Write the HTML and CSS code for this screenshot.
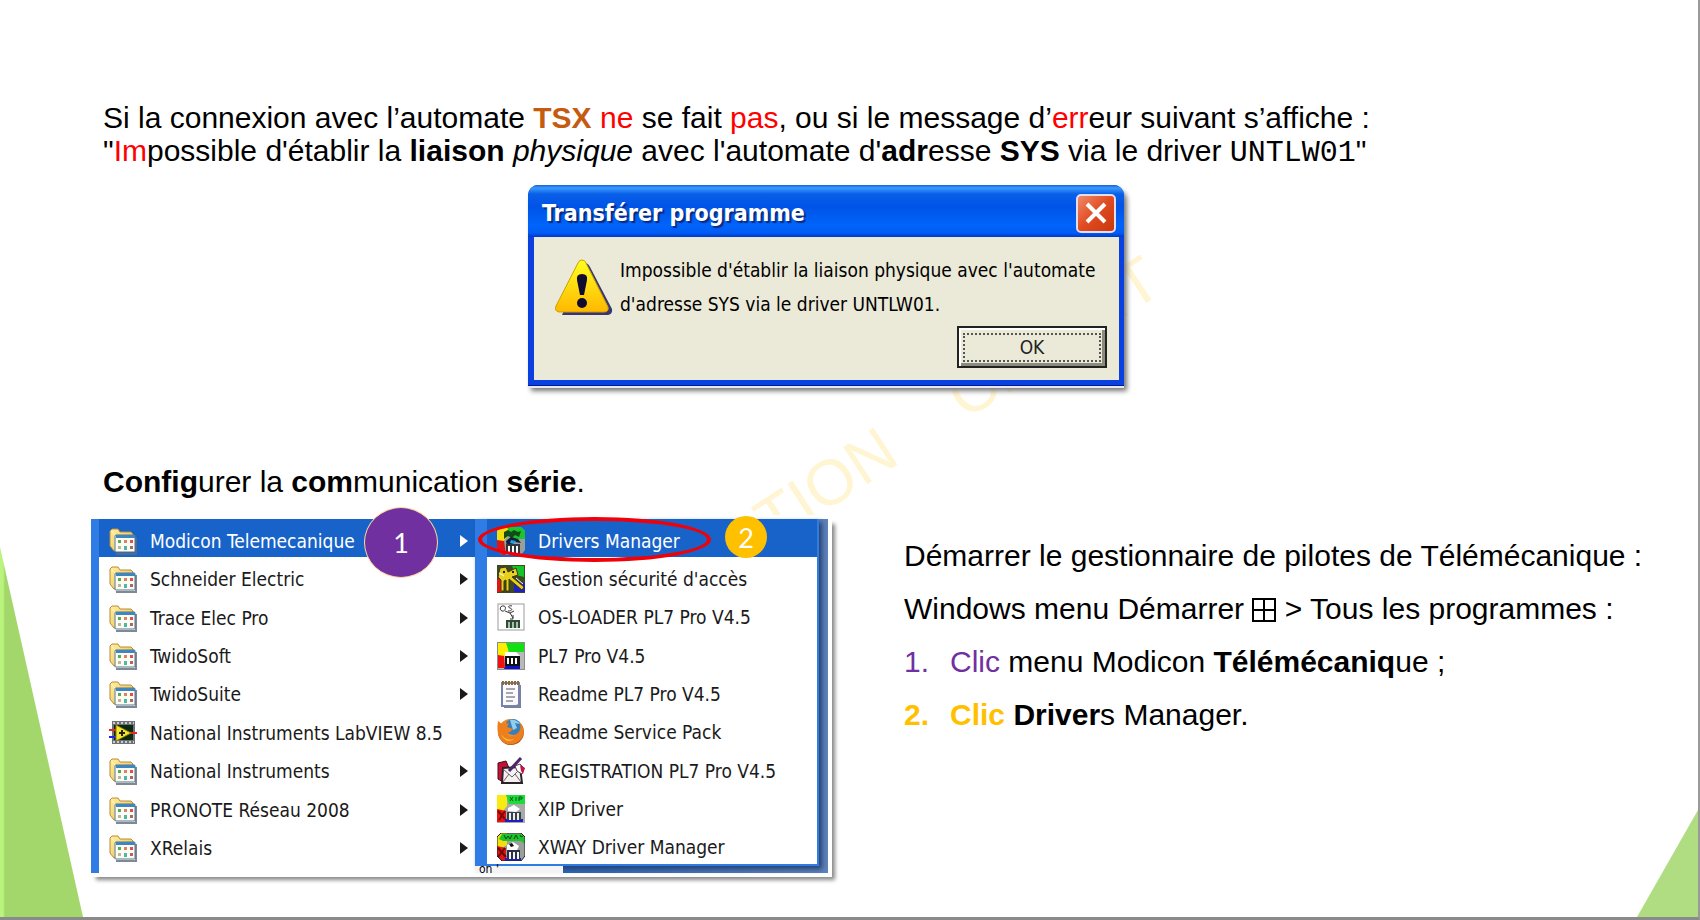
FILE: index.html
```html
<!DOCTYPE html>
<html lang="fr">
  <head>
    <meta charset="UTF-8" />
    <meta name="viewport" content="width=device-width, initial-scale=1.0" />
    <title>Configurer la communication série</title>
    <link rel="stylesheet" href="styles.css">
  </head>
  <body>
    <!-- shared icons -->
    <svg class="defs" aria-hidden="true">
      <defs>
        <linearGradient id="fold" x1="0" y1="0" x2="1" y2="1">
          <stop offset="0" stop-color="#fff0a0" />
          <stop offset="1" stop-color="#e9b94c" />
        </linearGradient>
        <linearGradient id="warn" x1="0" y1="0" x2="0" y2="1">
          <stop offset="0" stop-color="#ffff20" />
          <stop offset="1" stop-color="#ffb800" />
        </linearGradient>
        <radialGradient id="fox" cx="50%" cy="35%" r="65%">
          <stop offset="0" stop-color="#ffc04a" />
          <stop offset="0.6" stop-color="#ee7d1c" />
          <stop offset="1" stop-color="#a8420c" />
        </radialGradient>
        <symbol id="folder" viewBox="0 0 28 28">
          <path d="M7 27h20V10" fill="none" stroke="#5f6c7c" stroke-width="2" opacity=".8" />
          <path d="M1 4l2-2h6l2 3h11l2 2v15l-2 2H5l-4-5z" fill="url(#fold)" stroke="#b98a35" stroke-width="1" />
          <path d="M3 5l3 3v14" fill="none" stroke="#fff6c8" stroke-width="1" />
          <rect x="6" y="8" width="20" height="17" rx="1" fill="#fdfcf2" stroke="#55758e" />
          <rect x="7" y="8" width="19" height="3" fill="#3e86c0" />
          <path d="M9 13h3v3H9z" fill="#5aa85a" />
          <path d="M15 13h3v3h-3z" fill="#e0806a" />
          <path d="M21 13h3v3h-3z" fill="#e04e4e" />
          <path d="M9 19h3v3H9z" fill="#b9b89c" />
          <path d="M15 19h3v4h-3z" fill="#4fb8a4" />
          <path d="M21 19h3v3h-3z" fill="#b36464" />
        </symbol>
        <symbol id="labview" viewBox="0 0 28 28">
          <rect x="3" y="2" width="23" height="23" fill="#6d7176" />
          <path d="M4 4h21M4 23h21" stroke="#c9cdd0" stroke-width="2" stroke-dasharray="2 2" />
          <rect x="5" y="6" width="19" height="15" fill="#0b2a10" />
          <path d="M0 11h8" stroke="#e22" stroke-width="2" />
          <path d="M0 18h8" stroke="#22e" stroke-width="2" />
          <path d="M20 14h8" stroke="#e22" stroke-width="2" />
          <path d="M7 6l15 8-15 8z" fill="#f5e72a" stroke="#8a7d10" />
          <path d="M10 14h6M13 11v6" stroke="#222" stroke-width="2" />
        </symbol>
        <symbol id="plc" viewBox="0 0 28 28">
          <rect width="28" height="28" fill="#8c8c8c" />
          <rect x="1" y="1" width="26" height="26" fill="#b9b9b9" />
          <path d="M1 1h10v9l-4 5H1z" fill="#ffee00" />
          <path d="M9 1h18v9H12z" fill="#12e012" />
          <path d="M1 13l6 1 1 12H1z" fill="#f01010" />
          <path d="M7 27l2-4h14v4z" fill="#1010c8" />
          <path d="M8 10h11l4 4H8z" fill="#fff" />
          <rect x="8" y="14" width="15" height="10" fill="#111" />
          <path d="M10 16h2v6h-2zM14 16h2v6h-2zM18 16h2v6h-2z" fill="#fff" />
        </symbol>
        <symbol id="drivers" viewBox="0 0 28 28">
          <path d="M4 0h20l4 4v19l-4 5H5l-5-5V4z" fill="#9a9f9a" />
          <path d="M0 4l4-4h7l1 8-7 8-5-2z" fill="#f3df10" />
          <path d="M0 13l7 1 2 14H5l-5-5z" fill="#e01515" />
          <path d="M10 0h14l4 4v8H14z" fill="#1cc52b" />
          <path d="M7 5l4-2 3 2 3-2 4 2 3-1-2 6-4-2-3 3-4-2-4 3z" fill="#114d17" />
          <path d="M9 14l5-4 7 2 3 4-6-1-3 3-5 1z" fill="#102040" />
          <path d="M14 13l5 1-2 3-4-1z" fill="#2aa0d8" />
          <path d="M9 17h14v10H9z" fill="#33363a" />
          <path d="M11 19h2v7h-2zM15 19h2v7h-2zM19 19h2v7h-2z" fill="#fff" />
        </symbol>
        <symbol id="xway" viewBox="0 0 28 28">
          <path d="M4 0h20l4 4v19l-4 5H5l-5-5V4z" fill="#9a9f9a" />
          <path d="M0 4l4-4h6v12l-5 3-5-1z" fill="#f3df10" />
          <path d="M5 1h19l4 4v6l-4-3H6L2 6z" fill="#1cc52b" />
          <path d="M7 2l2 4 2-3 2 3 2-4M17 6l2-4 2 4M23 2l1 2 2-1" fill="none" stroke="#0a4a14" stroke-width="1" />
          <path d="M0 13l9 2v13H5l-5-5z" fill="#e01515" />
          <path d="M1 15l8 9M8 15l-7 9" stroke="#6d0808" stroke-width="2" />
          <path d="M10 12l6-3 6 4-2 4H10z" fill="#fff" />
          <path d="M12 11l3-1 2 3-3 1z" fill="#111" />
          <path d="M8 28h16v-3H8z" fill="#1c1cc8" />
          <path d="M10 17h13v9H10z" fill="#2c3044" />
          <path d="M12 19h2v7h-2zM16 19h2v7h-2zM20 19h2v7h-2z" fill="#f4f4f4" />
          <path d="M4 0h20l4 4v19l-4 5H5l-5-5V4z" fill="none" stroke="#222" stroke-width="1" />
        </symbol>
        <symbol id="keys" viewBox="0 0 28 28">
          <rect width="28" height="28" fill="#3b4a22" />
          <path d="M15 1h12v11l-8-2z" fill="#15c527" />
          <path d="M0 14h5v13H0z" fill="#e01515" />
          <path d="M17 18h11v9H17z" fill="#2020c0" />
          <path d="M3 3l6-1 2 5 8-4 2 7-6 2 12 10-2 3-13-11v12h-3V15l-2 1v10H4V15L1 12z" fill="#e8d021" stroke="#40380a" />
          <path d="M19 13l7 6M2 8l5 3" stroke="#fff" stroke-width="1" />
          <path d="M6 6h2v2H6zM15 6h2v2h-2z" fill="#222" />
        </symbol>
        <symbol id="loader" viewBox="0 0 28 28">
          <rect x="1" y="1" width="26" height="26" fill="#fff" stroke="#9b9b9b" />
          <path d="M7 3c-4-1-5 4-2 5s5-4 2-5zM15 3c-3-1-5 1-2 2s2 3-2 3M8 8l5 2 3 5M13 10l4-2M16 12v4h-3" fill="none" stroke="#333" stroke-width="1" />
          <rect x="9" y="17" width="14" height="8" fill="#35463a" />
          <path d="M11 19h2v6h-2zM15 19h2v6h-2zM19 19h2v6h-2z" fill="#9ec6a4" />
        </symbol>
        <symbol id="notes" viewBox="0 0 28 28">
          <path d="M7 27h16V5" fill="none" stroke="#7d8290" stroke-width="2" />
          <path d="M5 3h17v22l-3 1H5z" fill="#fbfbff" stroke="#7783ad" stroke-width="2" />
          <path d="M5 3h17" stroke="#8c6a3a" stroke-width="4" stroke-dasharray="2 1" />
          <path d="M9 9h9M9 13h7M9 17h9M9 21h7" stroke="#555" stroke-width="1" />
        </symbol>
        <symbol id="firefox" viewBox="0 0 28 28">
          <circle cx="14" cy="14" r="13" fill="url(#fox)" />
          <circle cx="16" cy="9" r="8" fill="#3c7fb8" />
          <path d="M13 2c4-1 8 1 10 4l-5-1 2 5-4 2z" fill="#8fd0ea" />
          <path d="M1 3l4 3 7-1-2 4 6 2-3 3-3 1c2 4 8 4 11 0 3-3 3-7 2-10 4 4 5 11 1 16-5 7-15 7-20 1C0 17 0 9 1 3z" fill="#ee7f1d" />
          <path d="M4 15c2 5 7 8 13 6-4 4-11 2-13-6z" fill="#ffc14b" />
        </symbol>
        <symbol id="regist" viewBox="0 0 28 28">
          <path d="M1 6l8-2 3 7-6 14-5-3z" fill="#c41236" stroke="#4a0d1c" />
          <path d="M6 11l17-1 2 16H5z" fill="#f3f1f1" stroke="#2d2228" stroke-width="2" />
          <path d="M6 12l9 8 9-9M6 25l6-8M24 25l-6-8" fill="none" stroke="#6c6066" stroke-width="1" />
          <path d="M18 9l5-2 4 4-2 6-5-3z" fill="#fff" stroke="#55444f" />
          <path d="M23 8l5 3-2 6-2-3z" fill="#c41246" />
          <path d="M24 1l-12 13" stroke="#4a2768" stroke-width="3" />
        </symbol>
        <symbol id="xip" viewBox="0 0 28 28">
          <rect width="28" height="28" fill="#a7aba7" />
          <path d="M0 0h10v11l-4 5H0z" fill="#f7ec11" />
          <path d="M9 0h19v9H12z" fill="#1bdc38" />
          <path d="M13 2l3 4M16 2l-3 4M19 2v4M22 6V2h3v2h-3" fill="none" stroke="#0b5417" stroke-width="1" />
          <path d="M0 14l9 2v11H0z" fill="#ea1212" />
          <path d="M1 16l7 8M8 16l-6 9" stroke="#7d0808" stroke-width="2" />
          <path d="M11 13l6-3 6 4-4 3-8-1z" fill="#fff" />
          <path d="M8 27h18v-3H8z" fill="#1c1cc8" />
          <path d="M10 17h14v8H10z" fill="#3b3f50" />
          <path d="M12 18h2v7h-2zM16 18h2v7h-2zM20 18h2v7h-2z" fill="#e8f4e8" />
        </symbol>
      </defs>
    </svg>

    <main class="slide">
      <div class="corner left"></div>
      <div class="corner right"></div>
      <div class="watermark" aria-hidden="true"><span>PROTECTION</span><span>CREDIT</span></div>

      <p class="intro">
        Si la connexion avec l’automate <b class="orange">TSX</b> <span class="red">ne</span> se fait <span class="red">pas</span>, ou si le message d’<span class="red">err</span>eur suivant s’affiche :<br />
        "<span class="red">Im</span>possible d'établir la <b>liaison</b> <i>physique</i> avec l'automate d'<b>adr</b>esse <b>SYS</b> via le driver <span class="mono">UNTLW01</span>"
      </p>

      <section class="dialog" aria-labelledby="dialog-title">
        <header class="titlebar">
          <h2 id="dialog-title">Transférer programme</h2>
          <button class="close" type="button" aria-label="Fermer">
            <svg viewBox="0 0 24 24" width="24" height="24"><path d="M3 3l18 18M21 3L3 21" stroke="#fff" stroke-width="4" /></svg>
          </button>
        </header>
        <div class="dialog-body">
          <svg class="warning" viewBox="0 0 58 58">
            <path d="M30 5q3 0 5 4l22 42q1 5-4 6H7z" fill="#3b3470" />
            <path d="M27 2q3 0 4 3l22 44q1 5-4 5H4q-5-1-3-6L23 5q1-3 4-3z" fill="url(#warn)" stroke="#c9a200" />
            <path d="M27 16q6 0 5 6l-3 15h-4l-3-15q-1-6 5-6z" fill="#100c30" />
            <circle cx="27" cy="45" r="5" fill="#100c30" />
          </svg>
          <p>Impossible d'établir la liaison physique avec l'automate<br />d'adresse SYS via le driver UNTLW01.</p>
          <button class="ok" type="button"><span>OK</span></button>
        </div>
      </section>

      <h1><b>Config</b>urer la <b>com</b>munication <b>série</b>.</h1>

      <div class="columns">
        <div class="shot">
          <ul class="menu programs">
            <li><a class="active" href="#modicon"><svg class="icon"><use href="#folder" /></svg>Modicon Telemecanique<i class="arrow"></i></a></li>
            <li><a href="#schneider"><svg class="icon"><use href="#folder" /></svg>Schneider Electric<i class="arrow"></i></a></li>
            <li><a href="#trace"><svg class="icon"><use href="#folder" /></svg>Trace Elec Pro<i class="arrow"></i></a></li>
            <li><a href="#twidosoft"><svg class="icon"><use href="#folder" /></svg>TwidoSoft<i class="arrow"></i></a></li>
            <li><a href="#twidosuite"><svg class="icon"><use href="#folder" /></svg>TwidoSuite<i class="arrow"></i></a></li>
            <li><a href="#labview85"><svg class="icon"><use href="#labview" /></svg>National Instruments LabVIEW 8.5</a></li>
            <li><a href="#ni"><svg class="icon"><use href="#folder" /></svg>National Instruments<i class="arrow"></i></a></li>
            <li><a href="#pronote"><svg class="icon"><use href="#folder" /></svg>PRONOTE Réseau 2008<i class="arrow"></i></a></li>
            <li><a href="#xrelais"><svg class="icon"><use href="#folder" /></svg>XRelais<i class="arrow"></i></a></li>
          </ul>
          <div class="submenu">
            <ul class="menu">
              <li><a class="active" href="#dm"><svg class="icon"><use href="#drivers" /></svg>Drivers Manager</a></li>
              <li><a href="#gestion"><svg class="icon"><use href="#keys" /></svg>Gestion sécurité d'accès</a></li>
              <li><a href="#osloader"><svg class="icon"><use href="#loader" /></svg>OS-LOADER PL7 Pro V4.5</a></li>
              <li><a href="#pl7"><svg class="icon"><use href="#plc" /></svg>PL7 Pro V4.5</a></li>
              <li><a href="#readme"><svg class="icon"><use href="#notes" /></svg>Readme PL7 Pro V4.5</a></li>
              <li><a href="#sp"><svg class="icon"><use href="#firefox" /></svg>Readme Service Pack</a></li>
              <li><a href="#registration"><svg class="icon"><use href="#regist" /></svg>REGISTRATION PL7 Pro V4.5</a></li>
              <li><a href="#xipdriver"><svg class="icon"><use href="#xip" /></svg>XIP Driver</a></li>
              <li><a href="#xwaydriver"><svg class="icon"><use href="#xway" /></svg>XWAY Driver Manager</a></li>
            </ul>
            <div class="desktop">on '</div>
          </div>
          <div class="ring"></div>
          <span class="badge one">1</span>
          <span class="badge two">2</span>
        </div>

        <div class="steps">
          <p>Démarrer le gestionnaire de pilotes de Télémécanique :</p>
          <p>Windows menu Démarrer <svg class="win" viewBox="0 0 24 24"><path d="M1 1h22v22H1zM12 1v22M1 12h22" fill="none" stroke="#000" stroke-width="2" /></svg> &gt; Tous les programmes :</p>
          <ol>
            <li><span class="violet">1.</span><span><span class="violet">Clic</span> menu Modicon <b>Télémécaniq</b>ue ;</span></li>
            <li><b class="gold">2.</b><span><b class="gold">Clic</b> <b>Driver</b>s Manager.</span></li>
          </ol>
        </div>
      </div>
    </main>
  </body>
</html>
```
FILE: styles.css
```css
* {
  box-sizing: border-box;
}

body {
  margin: 0;
  background-color: #fff;
  color: #000;
  font-family: "Liberation Sans", Arial, sans-serif;
  font-size: 30px;
}

.defs {
  position: absolute;
  width: 0;
  height: 0;
}

.slide {
  position: relative;
  z-index: 0;
  min-height: 100vh;
  padding: 101px 40px 0 91px;
  overflow: hidden;
  border-right: 2px solid #999;
  border-bottom: 3px solid #8a8a8a;
}

/* green shapes of the slide theme */
.corner {
  position: absolute;
  bottom: 0;
  z-index: -2;
}

.corner.left {
  left: 0;
  width: 83px;
  height: 370px;
  background: linear-gradient(to right, #b9f57c 3px, #a3d76b 5px);
  clip-path: polygon(0 0, 100% 100%, 0 100%);
}

.corner.right {
  right: 0;
  width: 61px;
  height: 107px;
  background-color: #b0dd81;
  clip-path: polygon(100% 0, 100% 100%, 0 100%);
}

.watermark {
  position: absolute;
  left: 538px;
  top: 640px;
  z-index: -1;
  display: flex;
  gap: 76px;
  color: #fff5d2;
  font-size: 64px;
  line-height: 64px;
  transform: rotate(-33deg);
  transform-origin: left center;
}

.intro {
  margin: 0 12px 15px;
  line-height: 33px;
}

.red {
  color: #f00;
}

.orange {
  color: #c55a11;
}

.violet {
  color: #7030a0;
}

.gold {
  color: #ffc000;
}

.mono {
  font-family: "Liberation Mono", monospace;
}

/* message box */
.dialog {
  width: 596px;
  margin: 0 0 0 437px;
  padding: 0 5px 5px 6px;
  background-color: #0a3fe0;
  border-bottom: 1px solid #001a9c;
  border-radius: 10px 10px 0 0;
  box-shadow: 0 2px 0 #e8e8f4, 3px 5px 5px #777;
  font-family: "DejaVu Sans Condensed", "DejaVu Sans", sans-serif;
  font-size: 19px;
}

.titlebar {
  display: flex;
  align-items: center;
  justify-content: space-between;
  height: 52px;
  margin: 0 -5px 0 -6px;
  padding: 4px 8px 0 14px;
  background: linear-gradient(#1c5fd8, #3a9bff 3px, #0a5fe8 9px, #0053e6 22px, #0064fb 40px, #005cf4 48px, #0039c8);
  border-radius: 10px 10px 0 0;
}

.titlebar h2 {
  margin: 0;
  color: #fff;
  font-family: "DejaVu Sans Condensed", "DejaVu Sans", sans-serif;
  font-size: 23px;
  text-shadow: 2px 2px 1px #0a2a80;
}

.close {
  display: grid;
  place-items: center;
  width: 40px;
  height: 39px;
  padding: 0;
  background: linear-gradient(135deg, #f08a68, #e04a20 50%, #c8380c);
  border: 2px solid #e4dcf0;
  border-radius: 5px;
}

.dialog-body {
  display: grid;
  grid-template-columns: 59px 1fr;
  align-content: start;
  column-gap: 6px;
  height: 143px;
  padding: 16px 12px 0 21px;
  background-color: #ebe9d7;
}

.warning {
  width: 58px;
  height: 58px;
  margin-top: 5px;
}

.dialog-body p {
  margin: 0;
  line-height: 34px;
  white-space: nowrap;
}

.ok {
  grid-column: 2;
  justify-self: end;
  width: 150px;
  height: 42px;
  margin-top: 5px;
  padding: 4px;
  background-color: #ebe9d7;
  border: 2px solid #222;
  box-shadow: inset 2px 2px 0 #fff, inset -3px -3px 0 #8d8b7c;
  color: #222;
  font-family: "DejaVu Sans Condensed", "DejaVu Sans", sans-serif;
  font-size: 19px;
}

.ok span {
  display: block;
  border: 2px dotted #555;
  line-height: 25px;
}

h1 {
  margin: 79px 12px 21px;
  font-size: 30px;
  font-weight: normal;
  line-height: 33px;
}

.columns {
  display: flex;
  align-items: flex-start;
  gap: 76px;
}

/* start menu capture */
.shot {
  position: relative;
  display: flex;
  flex: none;
  width: 737px;
  height: 354px;
  background-color: #fff;
  box-shadow: 0 0 0 4px #fff, 6px 6px 4px 1px #888;
  font-family: "DejaVu Sans Condensed", "DejaVu Sans", sans-serif;
  font-size: 19px;
}

.menu {
  display: grid;
  grid-template-rows: repeat(9, 1fr);
  height: 347px;
  margin: 0;
  padding: 0;
  list-style: none;
}

.menu a {
  display: flex;
  align-items: center;
  height: 100%;
  padding: 5px 7px 0 10px;
  color: #1a1a1a;
  text-decoration: none;
  white-space: nowrap;
}

.menu .active {
  background-color: #1863c9;
  color: #fff;
}

.icon {
  width: 28px;
  height: 28px;
  margin-right: 13px;
}

.arrow {
  margin-left: auto;
  border: 6px solid transparent;
  border-left: 8px solid currentColor;
  border-right: 0;
}

.programs {
  width: 384px;
  height: 354px;
  padding-bottom: 8px;
  border-left: 8px solid #2f7ce4;
}

.submenu {
  flex: 1;
  background: linear-gradient(to right, #1e5bb8, #5f82bb);
}

.submenu .menu {
  width: 344px;
  background-color: #fff;
  border: solid #2f7ce4;
  border-width: 0 2px 2px 12px;
  box-shadow: 3px 3px 5px #24426f;
}

.desktop {
  width: 88px;
  padding-left: 4px;
  background-color: #f4f4f4;
  font-size: 12px;
  line-height: 7px;
}

.ring {
  position: absolute;
  left: 387px;
  top: -2px;
  width: 233px;
  height: 45px;
  border: 4px solid #f00008;
  border-radius: 50%;
}

.badge {
  position: absolute;
  display: grid;
  place-items: center;
  border-radius: 50%;
  color: #fff;
  font-family: Lato, sans-serif;
  font-size: 27px;
}

.badge.one {
  left: 273px;
  top: -12px;
  width: 74px;
  height: 71px;
  background-color: #7030a0;
  border: 1px solid #ffd9a0;
}

.badge.two {
  left: 634px;
  top: -3px;
  width: 42px;
  height: 42px;
  background-color: #ffc000;
}

.steps {
  margin-top: 10px;
  line-height: 53px;
  white-space: nowrap;
}

.steps p,
.steps ol {
  margin: 0;
  padding: 0;
  list-style: none;
}

.steps li {
  display: grid;
  grid-template-columns: 46px 1fr;
}

.win {
  width: 24px;
  height: 24px;
  vertical-align: -3px;
}
```
